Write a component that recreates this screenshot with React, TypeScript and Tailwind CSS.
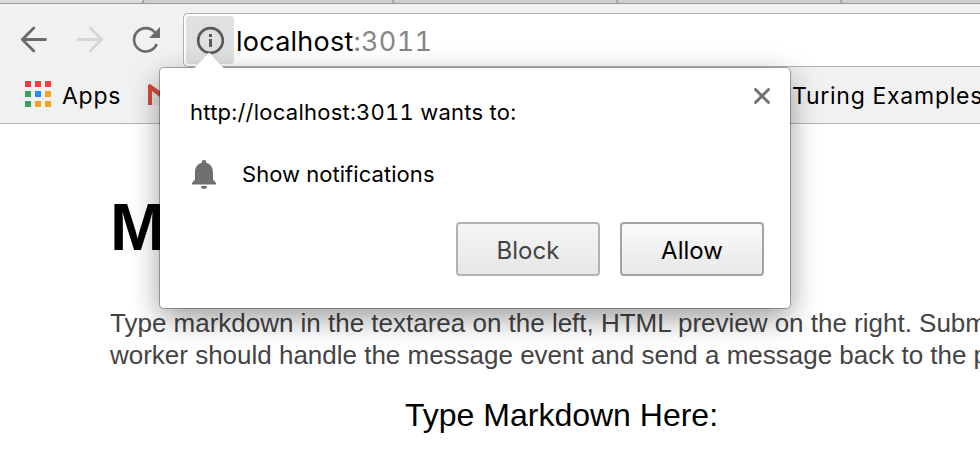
import React from "react";

const UI = "font-['Inter','Noto_Sans',sans-serif] tabular-nums";

const APP_COLORS = [
  "#f73a3c", "#f73a3c", "#f73a3c",
  "#3aa05c", "#2a8cf6", "#f2a123",
  "#3aa05c", "#f2a123", "#f2a123",
];

function TabStrip() {
  return (
    <svg className="block h-1 w-full shrink-0" viewBox="0 0 980 4" shapeRendering="crispEdges">
      <rect width="980" height="3" fill="#cfcfcf" />
      <rect width="142" height="3" fill="#dcdcdc" />
      <g stroke="#8c8c8c" strokeWidth="1.2" shapeRendering="auto">
        <path d="M144 0L142.500 3" />
        <path d="M392.500 0L394 3" />
        <path d="M616.500 0L618 3" />
        <path d="M840.500 0L842 3" />
      </g>
      <rect y="3" width="980" height="1" fill="#999" />
    </svg>
  );
}

function NavIcons() {
  return (
    <svg className="block h-[54px] w-[183px] shrink-0" viewBox="0 13 183 54" fill="none">
      <g stroke="#6b6b6b" strokeWidth="2.8" strokeLinecap="round" strokeLinejoin="round">
        <path d="M45.500 39.500H22.500M33.800 28L22.300 39.500L33.800 51" />
      </g>
      <g stroke="#d6d6d6" strokeWidth="2.8" strokeLinecap="round" strokeLinejoin="round">
        <path d="M78.500 39.500H101.500M90.200 28L101.700 39.500L90.200 51" />
      </g>
      <path d="M154.800 32.300A11.700 11.700 0 1 0 156.700 44" stroke="#6b6b6b" strokeWidth="2.7" />
      <path d="M160 27V38H149Z" fill="#6b6b6b" />
    </svg>
  );
}

function InfoIcon() {
  return (
    <svg className="block size-7" viewBox="0 0 28 28" fill="none">
      <circle cx="14.500" cy="14.500" r="12.300" stroke="#595959" strokeWidth="2.700" />
      <rect x="13" y="8" width="3" height="3" fill="#595959" />
      <rect x="13" y="13" width="3" height="8" fill="#595959" />
    </svg>
  );
}

function Toolbar() {
  return (
    <header className={`flex h-[120px] shrink-0 flex-col border-b border-[#b6b6b6] bg-[#f1f1f1] ${UI}`}>
      <div className="mt-[9px] flex h-[54px] w-[980px]">
        <NavIcons />
        <div className="flex h-[54px] grow items-start rounded-l-[5px] border border-r-0 border-[#b2b2b2] bg-white p-[2px]">
          <div className="flex h-12 w-12 items-center justify-center rounded-[3px] bg-[#e0e0e0]">
            <InfoIcon />
          </div>
          <div className="ml-[2px] whitespace-nowrap text-[27px] leading-[51px] tracking-[0.25px] text-black">
            localhost<span className="text-[#868686]">:3011</span>
          </div>
        </div>
      </div>
      <div className="flex h-[56px] w-[980px] items-center overflow-hidden whitespace-nowrap text-[23px] text-black">
        <div className="mb-[2px] ml-[25px] grid shrink-0 grid-cols-3 gap-1">
          {APP_COLORS.map((c, i) => (
            <span key={i} className="size-[6px]" style={{ backgroundColor: c }} />
          ))}
        </div>
        <span className="ml-[11px] mt-[2px] w-[59px] shrink-0 tracking-[0.75px]">Apps</span>
        <svg className="ml-[27px] h-6 w-8 shrink-0" viewBox="0 0 32 24">
          <path d="M3 4L16 13L29 4V22H3Z" fill="#e6e6e6" />
          <path d="M0 3Q0 1 2 1L16 11L30 1Q32 1 32 3V22H28V8L16 17L4 8V22H0Z" fill="#d54b3d" />
        </svg>
        <span className="ml-[612px] mt-[2px] shrink-0 tracking-[0.75px]">Turing Examples</span>
      </div>
    </header>
  );
}

function PageContent() {
  return (
    <main className="flex w-[1200px] flex-col pl-[110px] font-['Liberation_Sans',Arial,sans-serif]">
      <h1 className="mt-[66px] h-[75px] text-[66px] font-bold leading-[75px] text-black">M</h1>
      <p className="mt-[42px] whitespace-nowrap text-[26px] leading-8 tracking-[-0.01px] text-[#444]">
        Type markdown in the textarea on the left, HTML preview on the right. Subm
        <br />
        worker should handle the message event and send a message back to the p
      </p>
      <h2 className="ml-[295px] mt-[26px] whitespace-nowrap text-[32px] leading-9 text-black">
        Type Markdown Here:
      </h2>
    </main>
  );
}

function PermissionBubble() {
  return (
    <section
      className={`absolute left-[160px] top-[68px] flex h-[240px] w-[630px] flex-col rounded-[4px] bg-white text-black shadow-[0_0_0_1px_rgba(0,0,0,0.3),0_10px_30px_rgba(0,0,0,0.4)] ${UI}`}
    >
      <svg className="absolute left-[33px] -top-[16px] h-[17px] w-8" viewBox="0 0 32 17">
        <path d="M1 16L14.500 1.500Q16 0 17.500 1.500L31 16V17H1Z" fill="#fff" />
        <path d="M1 16L14.500 1.500Q16 0 17.500 1.500L31 16" fill="none" stroke="#000" strokeOpacity=".2" strokeWidth=".7" />
      </svg>
      <div className="flex h-[88px] items-start justify-between pl-[30px] pr-[20px]">
        <p className="mt-[30px] whitespace-nowrap text-[22px] leading-7 tracking-[0.24px]">http://localhost:3011 wants to:</p>
        <svg className="mt-5 size-4" viewBox="0 0 16 16" stroke="#707070" strokeWidth="2.900" strokeLinecap="round">
          <path d="M1.500 1.500L14.500 14.500M14.500 1.500L1.500 14.500" />
        </svg>
      </div>
      <div className="flex h-[66px] items-start pl-[31px]">
        <svg className="mt-[3px] h-8 w-[26px]" viewBox="0 0 26 32" fill="#6f6f6f">
          <path d="M13 1A2.200 2.200 0 0 1 15.200 3.800C19.500 5 22 8.500 22 13V20.500L25 24V25.500H1V24L4 20.500V13C4 8.500 6.500 5 10.800 3.800A2.200 2.200 0 0 1 13 1Z" />
          <path d="M10 27H16A3 3 0 0 1 10 27Z" />
        </svg>
        <p className="ml-[25px] mt-1 whitespace-nowrap text-[22px] leading-7 tracking-[0.06px]">Show notifications</p>
      </div>
      <div className="flex justify-end gap-5 pr-[26px] text-[24px]">
        <button className="h-[54px] w-36 rounded-[4px] border-2 border-[#b2b2b2] bg-linear-to-b from-[#f5f5f5] to-[#e6e6e6] pt-[3px] text-[#444]">
          Block
        </button>
        <button className="h-[54px] w-36 rounded-[4px] border-2 border-[#a3a3a3] bg-linear-to-b from-[#fafafa] to-[#e8e8e8] pt-[3px] text-black">
          Allow
        </button>
      </div>
    </section>
  );
}

export default function App() {
  return (
    <div className="relative flex h-[454px] w-[980px] flex-col overflow-hidden bg-white">
      <TabStrip />
      <Toolbar />
      <PageContent />
      <PermissionBubble />
    </div>
  );
}
